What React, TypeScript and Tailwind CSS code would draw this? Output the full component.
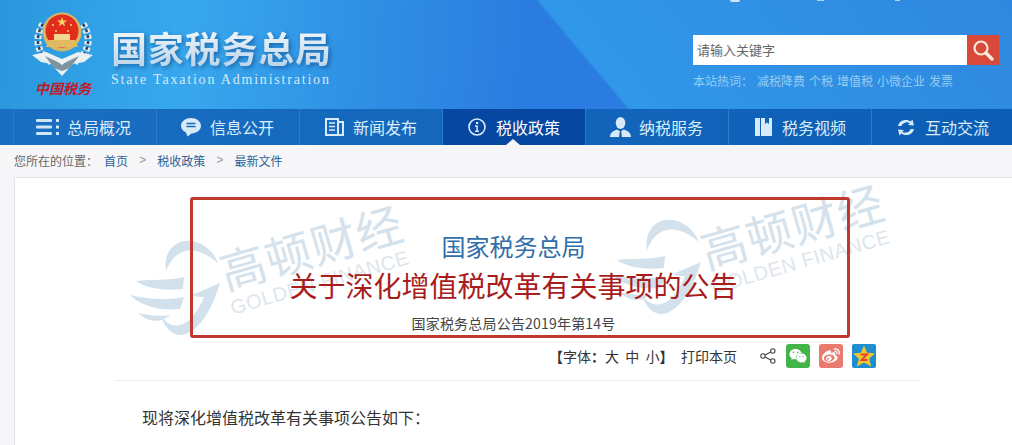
import React from "react";
import { FaWeibo, FaWeixin } from "react-icons/fa";

const cjk = "font-['Noto_Sans_CJK_SC','Liberation_Sans',sans-serif]";

const MenuIcon = () => (
  <svg width="24" height="18" viewBox="0 0 24 18" fill="#cfe6f8">
    <rect x="0" y="1" width="16" height="3" rx="1" />
    <rect x="0" y="7.5" width="16" height="3" rx="1" />
    <rect x="0" y="14" width="16" height="3" rx="1" />
    <rect x="20" y="1" width="3" height="3" />
    <rect x="20" y="7.5" width="3" height="3" />
    <rect x="20" y="14" width="3" height="3" />
  </svg>
);

const ChatIcon = () => (
  <svg width="20" height="19" viewBox="0 0 20 19">
    <path d="M10 0C4.5 0 0 3.4 0 7.8c0 3 2.100 5.500 5 6.800L6.500 18.500 10.500 15.500C15.800 15.400 20 12 20 7.800 20 3.400 15.500 0 10 0Z" fill="#d6eaf9" />
    <path d="M5.500 5.500H14.500M5.500 8.500H14.500" stroke="#1769bf" strokeWidth="1.400" />
  </svg>
);

const NewsIcon = () => (
  <svg width="19" height="18" viewBox="0 0 19 18" fill="none" stroke="#d6eaf9" strokeWidth="2">
    <path d="M1 1H13V17H1Z" />
    <path d="M13 4H18V17H13" />
    <path d="M4 5H10M4 8.500H10M4 12H10" strokeWidth="1.500" />
  </svg>
);

const InfoIcon = () => (
  <svg width="18" height="18" viewBox="0 0 18 18" fill="none" stroke="#d6eaf9">
    <circle cx="9" cy="9" r="8" strokeWidth="1.600" />
    <rect x="8" y="4" width="2.200" height="2" fill="#d6eaf9" stroke="none" />
    <path d="M7 8H9.100V13M7 13.300H11" strokeWidth="1.500" />
  </svg>
);

const UserIcon = () => (
  <svg width="21" height="20" viewBox="0 0 21 20">
    <ellipse cx="10.500" cy="6" rx="4.800" ry="6" fill="#d6eaf9" />
    <path d="M0 20C0 15.500 3.500 13.500 7.500 12.500L10.500 15 13.500 12.500C17.500 13.500 21 15.500 21 20Z" fill="#d6eaf9" />
    <path d="M9.700 15H11.300L11.800 20H9.200Z" fill="#17548f" />
  </svg>
);

const VideoIcon = () => (
  <svg width="17" height="18" viewBox="0 0 17 18" fill="#d6eaf9">
    <path d="M0 0H5V18H0Z" />
    <path d="M6 0H10V6L12 4.500 14 6V0H17V18H6Z" />
  </svg>
);

const SwapIcon = () => (
  <svg width="18" height="17" viewBox="0 0 18 17" fill="#d6eaf9">
    <path d="M1 7C2 3 5 1 9 1c2 0 3.500.6 4.600 1.500L15.500.5 17 6.500 11 6 12.800 4.200C11.800 3.500 10.500 3.200 9 3.400 6.500 3.700 5 5 4.300 7Z" />
    <path d="M17 10c-1 4-4 6-8 6-2 0-3.500-.6-4.600-1.500L2.500 16.500 1 10.500 7 11 5.200 12.800C6.200 13.500 7.500 13.800 9 13.600 11.500 13.300 13 12 13.700 10Z" />
  </svg>
);

const navItems = [
  { label: "总局概况", icon: <MenuIcon /> },
  { label: "信息公开", icon: <ChatIcon /> },
  { label: "新闻发布", icon: <NewsIcon /> },
  { label: "税收政策", icon: <InfoIcon />, active: true },
  { label: "纳税服务", icon: <UserIcon /> },
  { label: "税务视频", icon: <VideoIcon /> },
  { label: "互动交流", icon: <SwapIcon /> },
];

// faded logo + name stamped behind the article head
const Watermark = ({ className }: { className: string }) => (
  <div className={`absolute flex items-start pointer-events-none ${className}`}>
    <svg width="92" height="98" viewBox="0 0 92 98" className="mt-[20px] shrink-0" fill="#d2e1ec">
      <path d="M88 24C80 4 60-2 48 4 38 9 34 20 36 32 40 22 46 14 56 12 68 10 78 16 88 24Z" />
      <path d="M6 42C20 40 38 42 54 38L53 50C36 52 18 50 6 42Z" />
      <path d="M0 56C16 60 36 62 54 58L50 70C32 72 12 68 0 56Z" />
      <path d="M8 74C18 76 28 78 40 76 32 84 18 84 8 74Z" />
      <path d="M30 76C36 92 46 100 58 94 74 86 84 64 90 44L62 56C66 58 70 58 74 58 68 72 60 84 50 86 42 88 36 84 30 76Z" />
    </svg>
    <div className="ml-[-2px] -rotate-[16deg] shrink-0">
      <div className={`${cjk} text-[46px] leading-[52px] tracking-[1px] text-[#d5e2eb] whitespace-nowrap`}>高顿财经</div>
      <div className="font-['Liberation_Sans',sans-serif] text-[20px] leading-[24px] tracking-[0.5px] text-[#dde6ed] whitespace-nowrap">GOLDEN FINANCE</div>
    </div>
  </div>
);

const Emblem = () => (
  <svg width="62" height="66" viewBox="0 0 62 66">
    <path d="M11 12C2 26 5 42 19 50" fill="none" stroke="#e3eaea" strokeWidth="7" strokeDasharray="4 2" />
    <path d="M51 12C60 26 57 42 43 50" fill="none" stroke="#e3eaea" strokeWidth="7" strokeDasharray="4 2" />
    <path d="M11 12C2 26 5 42 19 50" fill="none" stroke="#27466a" strokeWidth="2.500" strokeDasharray="3 3" />
    <path d="M51 12C60 26 57 42 43 50" fill="none" stroke="#27466a" strokeWidth="2.500" strokeDasharray="3 3" />
    <circle cx="30" cy="20" r="19.500" fill="#d9b566" />
    <circle cx="30" cy="19" r="16.500" fill="#e22d1d" />
    <path d="M30 5l1.300 3.500h3.700l-3 2.200 1.100 3.600-3.100-2.200-3.100 2.200 1.100-3.600-3-2.200h3.700Z" fill="#f4d56a" />
    <circle cx="21" cy="13" r="1.100" fill="#f4d56a" />
    <circle cx="39" cy="13" r="1.100" fill="#f4d56a" />
    <circle cx="24" cy="19" r="1" fill="#f4d56a" />
    <circle cx="36" cy="19" r="1" fill="#f4d56a" />
    <path d="M22 22H38V28H22Z" fill="#f0d98e" />
    <path d="M17 28H43L46 35H14Z" fill="#e0bb62" />
    <path d="M0 43L14 40 30 47 46 40 61 43 52 50 41 52 30 64 19 52 9 50Z" fill="#e9f0f2" />
    <path d="M13 44L30 52 47 44 38 56 30 59 22 56Z" fill="#7f94a1" />
    <path d="M24 48H36L30 53Z" fill="#eef3f4" />
  </svg>
);

const QzoneIcon = () => (
  <svg width="24" height="24" viewBox="0 0 24 24">
    <rect width="24" height="24" rx="2" fill="#1d8fd0" />
    <path d="M12 1.500L15.200 8.800 23 9.500 17.200 14.600 19.200 22.500 12 18.400 4.800 22.500 6.800 14.600 1 9.500 8.800 8.800Z" fill="#f5c52c" />
    <path d="M8.500 10.500H15L9.500 16H15.500" fill="none" stroke="#e0472e" strokeWidth="1.800" />
  </svg>
);

export default function App() {
  return (
    <div className={`${cjk} w-[1012px] h-[445px] overflow-hidden bg-[#f6f6f8]`}>
      {/* Header */}
      <header className="relative h-[109px] flex justify-between bg-[linear-gradient(50deg,transparent_480px,#3097e9_483px,#2f88df_100%),linear-gradient(95deg,#2a97dc_0%,#38a8ee_18%,#2f90e4_36%,#2b7ce0_52%)]">
        {/* clipped top links */}
        <span className="absolute left-[730px] top-0 w-[10px] h-[2px] bg-[#cfe6f8] rounded-b-[2px]" />
        <span className="absolute left-[817px] top-0 w-[7px] h-[1px] bg-[#a9d6f5]" />
        <span className="absolute left-[895px] top-0 w-[5px] h-[1px] bg-[#a9d6f5]" />

        <div className="flex items-start pl-[32px] pt-[12px]">
          <div className="w-[62px] flex flex-col items-center">
            <Emblem />
            <div className="text-[14px] leading-[20px] font-bold italic text-[#c01a28] whitespace-nowrap">中国税务</div>
          </div>
          <div className="ml-[17px] pt-[15px]">
            <div className="text-[36px] leading-[40px] font-bold tracking-[0.8px] whitespace-nowrap bg-[linear-gradient(180deg,#f4f9fc,#bcd4ea)] bg-clip-text text-transparent [filter:drop-shadow(2px_2px_2px_rgba(10,60,120,0.55))]">国家税务总局</div>
            <div className="font-['Liberation_Serif',serif] text-[14px] leading-[16px] mt-[5px] tracking-[1.8px] text-[#d4e9f8] whitespace-nowrap">State Taxation Administration</div>
          </div>
        </div>
        <div className="w-[306px] mr-[13px] pt-[35px]">
          <div className="flex h-[30px]">
            <div className="w-[274px] bg-white pl-[4px] text-[13px] leading-[30px] text-[#666]">请输入关键字</div>
            <button className="w-[32px] bg-[#d9493a] flex items-center justify-center">
              <svg width="22" height="22" viewBox="0 0 22 22" fill="none" stroke="#fbe9dc">
                <circle cx="9" cy="9" r="6.500" strokeWidth="2.200" />
                <path d="M14 14L20 20" strokeWidth="3.400" strokeLinecap="round" />
              </svg>
            </button>
          </div>
          <div className="flex gap-[4px] mt-[8px] text-[12px] leading-[16px] text-[#95cdf3] whitespace-nowrap">
            <span>本站热词：</span>
            <span>减税降费</span>
            <span>个税</span>
            <span>增值税</span>
            <span>小微企业</span>
            <span>发票</span>
          </div>
        </div>
      </header>

      {/* Nav */}
      <nav className="h-[36px] flex pl-[13px] bg-[linear-gradient(90deg,#1a6fc2,#0c5eb4)]">
        {navItems.map((item) => (
          <div
            key={item.label}
            className={`relative w-[143px] shrink-0 flex items-center border-l border-[#2c7cc9] text-[16px] whitespace-nowrap ${
              item.active ? "bg-[#0647a2] text-white" : "text-[#dcedf9]"
            }`}
          >
            <span className="ml-[15px] w-[38px] flex justify-center">{item.icon}</span>
            <span>{item.label}</span>
            {item.active && (
              <span className="absolute left-[63px] bottom-0 w-0 h-0 border-x-[7px] border-x-transparent border-b-[6px] border-b-[#f6f6f8]" />
            )}
          </div>
        ))}
      </nav>

      {/* Breadcrumb */}
      <div className="h-[32px] flex items-center pl-[14px] text-[12px] whitespace-nowrap">
        <span className="text-[#666]">您所在的位置：</span>
        <span className="ml-[6px] text-[#2a6296]">首页</span>
        <span className="mx-[11px] text-[#999] font-['Liberation_Mono',monospace]">&gt;</span>
        <span className="text-[#2a6296]">税收政策</span>
        <span className="mx-[11px] text-[#999] font-['Liberation_Mono',monospace]">&gt;</span>
        <span className="text-[#2a6296]">最新文件</span>
      </div>

      {/* Article */}
      <main className="relative ml-[14px] h-[300px] bg-white border border-r-0 border-[#e4e4e8] pt-[19px] overflow-hidden">
        <Watermark className="left-[115px] top-[41px]" />
        <Watermark className="left-[596px] top-[20px]" />

        <div className="relative ml-[175px] w-[660px] h-[141px] border-[3px] border-[#c0392f] rounded-[3px] flex flex-col items-center pr-[13px] whitespace-nowrap">
          <div className="mt-[30px] text-[24px] leading-[32px] text-[#2f6ea8]">国家税务总局</div>
          <div className="mt-[5px] text-[28px] leading-[36px] text-[#a81c1c]">关于深化增值税改革有关事项的公告</div>
          <div className="mt-[11px] text-[14px] leading-[18px] text-[#444] tracking-[0.2px]">国家税务总局公告2019年第14号</div>
        </div>

        <div className="relative flex items-center h-[36px] ml-[534px] text-[14px] text-[#333] whitespace-nowrap">
          <span className="w-[120px]"><span className="font-bold">【</span>字体<span className="font-bold">：</span>大&nbsp;&nbsp;中&nbsp;&nbsp;小<span className="font-bold">】</span></span>
          <span className="ml-[12px]">打印本页</span>
          <svg width="16" height="16" viewBox="0 0 16 16" fill="none" stroke="#444" strokeWidth="1.100" className="ml-[23px]">
            <circle cx="12.800" cy="3" r="2.200" />
            <circle cx="3" cy="8" r="2.200" />
            <circle cx="12.800" cy="13" r="2.200" />
            <path d="M5 7L10.800 4M5 9L10.800 12" />
          </svg>
          <span className="ml-[10px] w-[24px] h-[24px] rounded-[3px] bg-[#43b548] flex items-center justify-center text-white text-[18px]">
            <FaWeixin />
          </span>
          <span className="ml-[9px] w-[24px] h-[24px] rounded-[3px] bg-[#ea7a6e] flex items-center justify-center text-white text-[18px]">
            <FaWeibo />
          </span>
          <span className="ml-[9px]">
            <QzoneIcon />
          </span>
        </div>

        <div className="relative ml-[100px] w-[805px] border-t border-[#efeff1] mt-[6px]" />
        <p className="relative ml-[127px] mt-[25px] text-[16px] leading-[22px] text-[#333] whitespace-nowrap">现将深化增值税改革有关事项公告如下：</p>
      </main>
    </div>
  );
}
